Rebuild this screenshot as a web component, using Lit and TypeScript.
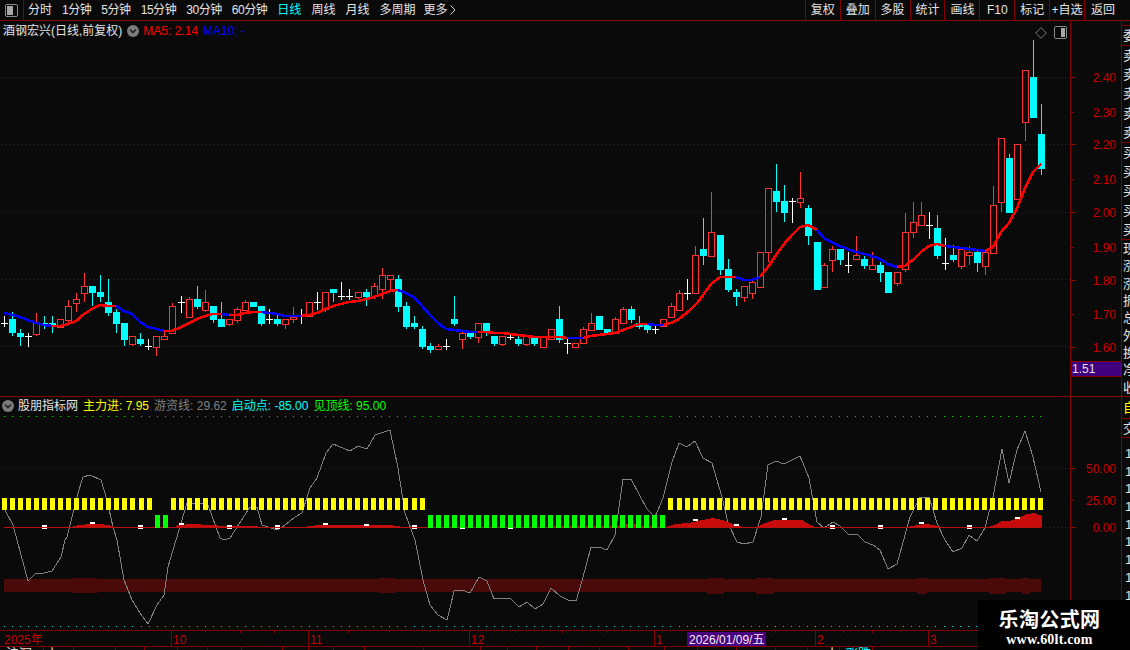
import { LitElement, html, css, svg } from "lit";
import { customElement } from "lit/decorators.js";

type C = [string, number, number, number, number, number];
const CANDLES: C[] = [
  ["w",4,323,323,316,326],["c",12,319,332,312,336],["c",20,333,336,329,346],["w",28,336,336,333,346],
  ["r",36,323,334,313,336],["c",44,323,325,316,329],["c",52,323,325,316,333],["r",60,319,327,319,327],
  ["r",68,306,320,300,323],["r",76,299,303,293,312],["r",84,286,293,273,302],["c",92,286,292,286,306],
  ["c",100,292,296,275,302],["c",108,302,312,279,316],["c",116,312,323,309,333],["c",124,323,339,323,346],
  ["r",132,336,344,336,346],["c",140,339,343,333,346],["w",148,346,346,339,349],["r",156,336,347,336,356],
  ["r",164,336,339,332,339],["r",172,306,333,303,333],["w",181,302,302,296,312],["r",189,299,317,297,318],
  ["c",197,299,306,286,309],["r",205,302,310,290,312],["c",213,306,319,306,323],["c",221,319,326,302,326],
  ["r",229,319,324,319,326],["r",237,309,320,307,323],["r",245,302,310,300,310],["c",253,302,306,302,306],
  ["c",261,306,323,306,326],["w",269,319,319,309,323],["c",277,319,323,313,326],["r",285,319,324,319,329],
  ["r",293,317,319,307,323],
  ["w",301,316,316,309,323],["r",309,302,316,302,317],["w",317,302,302,292,309],["r",325,292,309,292,312],
  ["c",333,289,292,289,302],["w",341,296,296,282,299],["w",349,296,296,289,299],["r",358,292,297,292,299],
  ["c",366,292,296,289,306],["r",374,286,296,283,299],["r",382,275,289,268,299],["r",390,275,279,275,290],
  ["c",398,279,306,275,312],["c",406,306,326,302,329],["c",414,323,326,316,329],["c",422,329,346,326,349],
  ["c",430,346,349,343,353],["r",438,346,349,344,349],["w",446,346,346,339,349],["c",454,319,323,296,326],
  ["r",462,333,339,331,349],["c",470,332,336,332,339],["r",478,323,337,323,343],["c",486,323,331,323,336],
  ["c",494,336,343,336,346],["r",502,336,344,336,346],["w",510,337,337,333,339],["c",518,339,343,336,346],
  ["r",526,336,344,336,346],["c",534,338,343,338,346],["r",543,337,347,337,347],["r",551,329,339,329,339],
  ["c",559,319,339,306,343],["w",567,343,343,339,353],["r",575,343,347,343,347],["r",583,329,343,327,343],
  ["r",591,323,330,313,330],["c",599,316,329,316,329],["c",607,329,333,329,333],["r",615,319,333,317,333],
  ["r",623,309,323,307,323],["c",631,309,319,306,323],["c",639,323,326,316,329],["c",647,323,329,323,333],
  ["w",655,329,329,326,333],["r",663,319,326,319,327],["r",671,306,317,303,317],["r",679,293,310,290,310],
  ["w",687,293,293,279,299],["r",695,255,293,246,293],["c",703,249,255,218,265],["r",711,232,256,192,256],
  ["c",720,235,269,235,275],["c",728,269,289,259,292],["c",736,292,296,289,306],["r",744,286,297,286,302],
  ["r",752,282,293,279,299],["r",760,252,287,252,287],["r",768,188,252,188,262],["c",776,191,201,164,212],
  ["c",784,201,212,185,222],["w",792,201,201,198,222],["r",800,198,202,172,208],["c",808,208,235,205,245],
  ["c",817,242,289,242,289],["r",824,265,287,263,287],["r",832,249,260,246,272],["c",840,249,259,249,265],
  ["w",848,265,265,252,272],["r",856,255,259,236,259],["c",864,259,265,256,269],["r",872,265,269,252,269],
  ["c",880,265,272,262,282],["c",888,272,292,272,292],["r",897,272,283,272,286],["r",905,232,269,213,272],
  ["r",913,222,232,202,238],["r",921,215,225,202,225],["w",929,225,225,212,238],["c",937,228,255,215,259],
  ["w",945,263,263,238,269],["c",953,255,259,245,262],["r",961,249,266,247,269],["r",969,252,255,246,265],
  ["c",977,252,262,249,272],["r",985,252,266,249,275],["r",993,205,253,186,253],["r",1001,138,202,138,212],
  ["c",1009,158,212,154,212],["r",1017,144,199,144,199],["r",1025,70,122,70,141],["c",1033,77,117,40,117],
  ["c",1041,134,168,104,175],
];

const MA: number[][] = [
  [4,313],[12,315],[20,317],[28,320],[36,323],[44,325],[52,326],[60,326],[68,324],[76,321],[84,314],[92,309],
  [100,305],[108,306],[116,306],[124,311],[132,314],[140,322],[148,327],[156,329],[164,331],[172,331],[181,327],
  [189,323],[197,319],[205,316],[213,314],[221,314],[229,315],[237,315],[245,313],[253,312],[261,312],[269,313],
  [277,314],[285,316],[293,316],[301,316],[309,315],[317,313],[325,309],[333,306],[341,304],[349,302],[358,301],
  [366,299],[374,297],[382,294],[390,291],[398,290],[406,293],[414,297],[422,306],[430,315],[438,323],[446,329],
  [454,330],[462,331],[470,332],[478,332],[486,332],[494,333],[502,333],[510,334],[518,335],[526,336],[534,337],
  [543,337],[551,337],[559,337],[567,338],[575,338],[583,338],[591,336],[599,335],[607,334],[615,333],[623,330],
  [631,327],[639,324],[647,324],[655,325],[663,325],[671,323],[679,319],[690,310],[698,302],[711,284],[720,277],
  [736,277],[744,280],[752,280],[760,277],[768,267],[776,255],[784,244],[792,235],[800,227],[808,225],[817,230],
  [824,238],[832,242],[840,246],[848,249],[856,252],[864,254],[872,256],[880,259],[888,264],[897,267],[905,266],
  [913,260],[921,252],[929,246],[937,244],[945,246],[953,247],[961,248],[969,249],[977,250],[985,251],[993,247],
  [1001,232],[1009,223],[1017,208],[1025,188],[1033,172],[1041,164],
];
const MA_COL: [number, number, string][] = [
  [4,53,"#0000ff"],[53,117,"#ff0000"],[117,167,"#0000ff"],[167,221,"#ff0000"],[221,230,"#0000ff"],
  [230,262,"#ff0000"],[262,301,"#0000ff"],[301,398,"#ff0000"],[398,478,"#0000ff"],[478,567,"#ff0000"],
  [567,583,"#0000ff"],[583,647,"#ff0000"],[647,663,"#0000ff"],[663,736,"#ff0000"],[736,757,"#0000ff"],
  [757,817,"#ff0000"],[817,897,"#0000ff"],[897,945,"#ff0000"],[945,985,"#0000ff"],[985,1041,"#ff0000"],
];

const GRAY =
  "5,510 13,525 17,540 28,581 36,573 44,573 52,571 61,557 65,540 67,537 72,517 78,493 83,477 90,475 101,480 107,500 113,527 117,540 124,580 132,600 140,613 148,624 157,605 164,595 168,567 173,550 176,540 187,503 193,503 200,503 208,505 220,538 224,540 230,538 250,507 257,507 262,525 277,530 285,525 295,517 302,513 310,488 317,478 326,453 333,444 350,451 358,446 367,449 375,435 390,430 398,468 405,513 415,540 423,580 430,605 438,615 447,620 450,608 454,591 462,590 470,593 479,577 487,581 494,599 510,598 519,607 527,602 535,609 543,604 551,588 560,596 568,600 576,601 582,581 591,547 599,547 607,550 615,535 623,479 631,479 647,509 655,517 663,498 672,462 679,443 687,447 695,441 703,458 712,463 722,497 728,523 737,542 744,544 753,542 761,517 768,465 776,461 784,464 800,456 809,478 817,522 824,528 833,522 840,526 848,534 857,534 865,542 873,545 880,550 888,569 897,564 910,517 920,497 929,497 937,523 945,540 953,552 962,548 969,535 977,541 985,528 993,497 1002,449 1009,483 1017,450 1025,431 1033,457 1041,492";

const RED_AREAS = [
  "72,527 74,526 80,525 90,524 100,524 108,525 115,527",
  "175,527 178,525 192,524 210,525 225,526 257,526 258,527",
  "305,527 308,526 322,525 390,525 396,526 403,527",
  "547,527 550,526 618,526 620,524 637,524 640,526 667,527",
  "667,527 675,524 688,523 698,521 712,518 723,520 733,524 742,527",
  "756,527 768,522 775,520 802,520 810,525 815,527",
  "908,527 917,525 927,524 933,525 942,527",
  "988,527 997,524 1002,521 1010,521 1018,518 1027,514 1035,513 1042,516 1042,527",
];
const BUMPS: number[][] = [
  [72,97,578,593],[378,395,578,593],[707,724,578,594],[756,774,578,594],[917,927,578,594],
  [989,1006,578,594],[1022,1030,578,594],
];
const WHITES: number[][] = [
  [42,525,4],[90,522,2],[138,525,4],[179,523,2],[227,525,4],[275,525,4],[323,523,2],[364,524,2],[412,525,4],
  [460,528,1],[508,528,1],[693,519,2],[734,524,2],[782,518,2],[830,525,4],[878,525,4],[919,522,2],[967,525,4],[1015,517,2],
];
const barX = (i: number) => Math.round(2 + 8.03 * i);
const hDots = (y: number, a: number, b: number) => {
  let d = "";
  for (let x = a; x < b; x += 4) d += `M${x} ${y}h1v1h-1z`;
  return d;
};

const LABELS_MAIN: [number, string, boolean][] = [
  [77,"2.40",true],[112,"2.30",false],[144,"2.20",true],[179,"2.10",false],[212,"2.00",true],
  [247,"1.90",false],[280,"1.80",true],[314,"1.70",false],[347,"1.60",true],
];
const LABELS_SUB: [number, string, boolean][] = [[468,"50.00",true],[500,"25.00",false],[527,"0.00",true]];

const TABS = ["分时","1分钟","5分钟","15分钟","30分钟","60分钟","日线","周线","月线","多周期"];
const TOOLS = ["复权","叠加","多股","统计","画线","F10","标记","+自选","返回"];
const SIDE_MAIN = [
  { h: "s4", t: [""] },
  { h: "s19", t: ["委"] },
  { h: "s96", t: ["卖","卖","卖","卖","卖"] },
  { h: "s96", t: ["买","买","买","买","买"] },
  { h: "s156", t: ["现","涨","涨","振","总","外","换","净","收"] },
];
const TICKS_UP = [205,240,274,348,389,429,515,562,607,775,843,872,901];
const MAJORS: [number, string][] = [[171,"10"],[308,"11"],[469,"12"],[654,"1"],[815,"2"],[928,"3"]];
const TICKS_DOWN = [43,73,115,144,177,207,241,282,308,333,364,423,480,507,536,568,599,628,664,697,736,775,807,839,872];

@customElement("app-root")
export class AppRoot extends LitElement {
  static styles = css`
    :host {
      display: block; position: relative; width: 1130px; height: 650px; overflow: hidden;
      background: #0a0a0a; color: #e4e4e4;
      font: 12px/1 "Liberation Sans", "Noto Sans CJK SC", sans-serif;
    }
    svg { display: block; }
    .toolbar { display: flex; height: 20px; border-bottom: 1px solid #800000; align-items: stretch; }
    .pane-btn { width: 23px; border-right: 1px solid #800000; display: flex; align-items: center; justify-content: center; }
    .tabs { flex: 1; display: flex; gap: 10px; align-items: center; padding-left: 4px; }
    .tab { white-space: nowrap; }
    .tab.digit { letter-spacing: -0.45px; }
    .tab.on { color: #00ffff; }
    .more { display: flex; align-items: center; gap: 3px; margin-left: -2px; }
    .tools { display: flex; padding-right: 9px; }
    .tool { width: 33.9px; border-left: 1px solid #800000; display: flex; align-items: center; justify-content: center; white-space: nowrap; }
    .tool:last-child { width: 36px; }

    .row { display: flex; }
    .row.main { height: 375px; border-bottom: 1px solid #800000; }
    .row.sub { height: 253px; }
    .chart { position: relative; width: 1070px; flex: none; }
    .axis { width: 50px; flex: none; border-left: 1px solid #800000; position: relative; }
    .side { width: 8px; flex: none; border-left: 1px solid #800000; overflow: hidden; }

    .legend { position: absolute; top: 4px; left: 3px; display: flex; align-items: center; gap: 5px; white-space: nowrap; }
    .legend.sub { top: 3px; left: 2px; }
    .legend .icon { margin-right: -1px; }
    .red { color: #ff0000; } .blue { color: #0000ff; } .yellow { color: #ffff00; }
    .gray { color: #808080; } .cyan { color: #00ffff; } .green { color: #00ff00; }
    .corner { position: absolute; top: 5px; right: 3px; display: flex; gap: 7px; align-items: center; }

    .badge {
      position: absolute; left: 0; top: 340px; width: 50px; height: 16px; box-sizing: border-box;
      background: #40007f; border-top: 1px solid #800000; border-bottom: 1px solid #800000;
      color: #e4e4e4; display: flex; align-items: center; padding-left: 1px;
    }
    .stack { display: flex; flex-direction: column; }
    .sect { box-sizing: content-box; border-bottom: 1px solid #800000; display: flex; flex-direction: column; justify-content: space-around; overflow: hidden; }
    .s4 { height: 4px; } .s19 { height: 19px; } .s96 { height: 96px; } .s156 { height: 156px; border-bottom: 0; }
    .sect span, .nums span { display: block; width: 14px; margin-left: 1px; font-size: 13px; line-height: 1; }
    .sect.y { height: 21px; color: #ffff00; } .sect.w { height: 18px; }
    .nums { display: flex; flex-direction: column; gap: 4.7px; padding-top: 9px; }
    .nums span { padding-left: 2px; }

    .time { height: 15px; border-top: 1px solid #800000; border-bottom: 1px solid #800000; }
    .foot { height: 3px; overflow: hidden; }

    .mark {
      position: absolute; left: 978px; top: 600px; width: 152px; height: 50px; background: #000;
      box-sizing: border-box; padding-right: 9px;
      display: flex; flex-direction: column; align-items: center; color: #fff; font-weight: bold;
    }
    .mark .cn { font-size: 20px; line-height: 20px; margin-top: 9px; font-family: "Noto Sans CJK SC", sans-serif; letter-spacing: 0.4px; }
    .mark .en { font-family: "Liberation Serif", serif; font-size: 14px; line-height: 14px; margin-top: 4px; letter-spacing: 0.2px; }
  `;

  private paneIcon(right: boolean) {
    return html`<svg width="13" height="13" viewBox="0 0 13 13" shape-rendering="crispEdges">
      <rect x="0.5" y="0.5" width="12" height="12" rx="2" fill="none" stroke="#8a8a8a"></rect>
      <rect x=${right ? 7 : 2} y="2" width=${right ? 4 : 6} height="9" fill="#a8a8a8"></rect>
    </svg>`;
  }
  private chevIcon() {
    return html`<svg class="icon" width="12" height="12" viewBox="0 0 12 12">
      <circle cx="6" cy="6" r="6" fill="#7c7c7c"></circle>
      <path d="M3 4.5 L6 7.5 L9 4.5" fill="none" stroke="#161616" stroke-width="1.3"></path>
    </svg>`;
  }

  private candles() {
    let cy = "", rd = "", wh = "", hollow = "";
    for (const [t, x, top, bot, hi, lo] of CANDLES) {
      if (t === "c") {
        cy += `M${x - 3} ${top}h7V${bot + 1}h-7zM${x} ${hi}h1V${lo}h-1z`;
      } else if (t === "w") {
        wh += `M${x} ${hi}h1V${lo + 1}h-1zM${x - 3} ${top}h7v1h-7z`;
      } else {
        hollow += `M${x - 2.5} ${top + 0.5}h6V${bot + 0.5}h-6z`;
        if (hi < top) rd += `M${x} ${hi}h1V${top}h-1z`;
        if (lo > bot) rd += `M${x} ${bot}h1V${lo}h-1z`;
      }
    }
    return svg`
      <path d=${rd} fill="#ff3232"></path>
      <path d=${hollow} fill="none" stroke="#ff3232"></path>
      <path d=${cy} fill="#00ffff"></path>
      <path d=${wh} fill="#ffffff"></path>`;
  }
  private maLine() {
    const near = (x: number) => {
      let b = 0;
      MA.forEach((p, i) => { if (Math.abs(p[0] - x) < Math.abs(MA[b][0] - x)) b = i; });
      return b;
    };
    return MA_COL.map(([a, b, c]) => {
      const pts = MA.slice(near(a), near(b) + 1).map((p) => p.join(",")).join(" ");
      return svg`<polyline points=${pts} fill="none" stroke=${c} stroke-width="2.6"></polyline>`;
    });
  }
  private mainChart() {
    const grid = [77, 144, 212, 279, 346].map((y) => hDots(y, 1, 1070)).join("");
    return html`<svg width="1070" height="375" viewBox="0 21 1070 375" shape-rendering="crispEdges">
      <path d=${grid} fill="#780000"></path>
      ${this.candles()}
      ${this.maLine()}
    </svg>`;
  }
  private subChart() {
    const dots = (y: number) => {
      let d = "";
      for (let i = 0; i < 130; i++) d += `M${Math.round(4 + 8.03 * i)} ${y}h1v1h-1z`;
      return d;
    };
    let yel = "", grn = "";
    for (let i = 0; i < 130; i++) {
      const x = barX(i);
      if (i === 19 || i === 20 || (i >= 53 && i <= 82)) grn += `M${x} 515h5v13h-5z`;
      else yel += `M${x} 498h5v12h-5z`;
    }
    const whites = WHITES.map(([x, y, h]) => `M${x} ${y}h5v${h}h-5z`).join("");
    const bumps = BUMPS.map(([a, b, t, u]) => `M${a} ${t}H${b}V${u}H${a}z`).join("");
    return html`<svg width="1070" height="233" viewBox="0 397 1070 233" shape-rendering="crispEdges">
      <path d=${dots(416)} fill="#00e000"></path>
      <path d=${dots(626)} fill="#00e6e6"></path>
      <path d=${hDots(468, 1, 1070) + hDots(527, 1045, 1070)} fill="#780000"></path>
      <path d=${"M4 579H1041V592H4z" + bumps} fill="#4a0a0a"></path>
      <polyline points=${GRAY} fill="none" stroke="#808080"></polyline>
      ${RED_AREAS.map((p) => svg`<polygon points=${p} fill="#c80c0c"></polygon>`)}
      <path d=${whites} fill="#ffffff"></path>
      <line x1="4" x2="1041" y1="527.5" y2="527.5" stroke="#b81010"></line>
      <path d=${yel} fill="#ffff00"></path>
      <path d=${grn} fill="#00ff00"></path>
    </svg>`;
  }
  private axis(labels: [number, string, boolean][], y0: number, h: number) {
    return html`<svg width="50" height=${h} viewBox=${`0 ${y0} 50 ${h}`} shape-rendering="crispEdges">
      ${labels.map(([y, t, major]) => svg`
        <line x1="0" x2=${major ? 5 : 3} y1=${y + 0.5} y2=${y + 0.5} stroke="#a00000"></line>
        <text x="45" y=${y + 4.5} text-anchor="end" fill="#c80000" font-size="12" shape-rendering="auto">${t}</text>`)}
    </svg>`;
  }
  private timeAxis() {
    return html`<svg width="1070" height="15" viewBox="0 631 1070 15" shape-rendering="crispEdges">
      ${TICKS_UP.map((x) => svg`<line x1=${x + 0.5} x2=${x + 0.5} y1="631" y2="633" stroke="#800000"></line>`)}
      ${MAJORS.map(([x, t]) => svg`
        <line x1=${x + 0.5} x2=${x + 0.5} y1="631" y2="646" stroke="#800000"></line>
        <text x=${x + 2} y="644" fill="#c80000" font-size="12">${t}</text>`)}
      <text x="4" y="644" fill="#c80000" font-size="12">2025年</text>
      <rect x="687" y="632" width="79" height="14" fill="#4b0082"></rect>
      <text x="689" y="644" fill="#f0f0f0" font-size="12">2026/01/09/五</text>
    </svg>`;
  }
  private foot() {
    return html`<svg width="1070" height="3" viewBox="0 647 1070 3">
      <g shape-rendering="crispEdges">
        ${TICKS_DOWN.map((x) => svg`<line x1=${x + 0.5} x2=${x + 0.5} y1="647" y2="650" stroke="#800000"></line>`)}
      </g>
      <text x="6" y="658" fill="#e4e4e4" font-size="13">沪深</text>
      <text x="46" y="658" fill="#e4e4e4" font-size="13">上</text>
      <text x="826" y="658" fill="#e4e4e4" font-size="13">上</text>
      <text x="845" y="658" fill="#00ffff" font-size="13">涨跌</text>
    </svg>`;
  }

  render() {
    return html`
      <div class="toolbar">
        <div class="pane-btn">${this.paneIcon(false)}</div>
        <div class="tabs">
          ${TABS.map((t) => html`<span class="tab ${/\d/.test(t) ? "digit" : ""} ${t === "日线" ? "on" : ""}">${t}</span>`)}
          <span class="tab more">更多
            <svg width="6" height="10" viewBox="0 0 6 10"><path d="M0.5 0.5 L5 5 L0.5 9.5" fill="none" stroke="#d8d8d8"></path></svg>
          </span>
        </div>
        <div class="tools">${TOOLS.map((t) => html`<div class="tool">${t}</div>`)}</div>
      </div>

      <div class="row main">
        <div class="chart">
          ${this.mainChart()}
          <div class="legend">
            <span>酒钢宏兴(日线,前复权)</span>
            ${this.chevIcon()}
            <span class="red">MA5: 2.14</span>
            <span class="blue">MA10: -</span>
          </div>
          <div class="corner">
            <svg width="12" height="12" viewBox="0 0 12 12"><path d="M6 0.7 L11.3 6 L6 11.3 L0.7 6 Z" fill="none" stroke="#7a7a7a"></path></svg>
            ${this.paneIcon(true)}
          </div>
        </div>
        <div class="axis">
          ${this.axis(LABELS_MAIN, 21, 375)}
          <div class="badge">1.51</div>
        </div>
        <div class="side stack">
          ${SIDE_MAIN.map((s) => html`<div class="sect ${s.h}">${s.t.map((c) => html`<span>${c}</span>`)}</div>`)}
        </div>
      </div>

      <div class="row sub">
        <div class="chart">
          ${this.subChart()}
          <div class="legend sub">
            ${this.chevIcon()}
            <span>股朋指标网</span>
            <span class="yellow">主力进: 7.95</span>
            <span class="gray">游资线: 29.62</span>
            <span class="cyan">启动点: -85.00</span>
            <span class="green">见顶线: 95.00</span>
          </div>
          <div class="time">${this.timeAxis()}</div>
          <div class="foot">${this.foot()}</div>
        </div>
        <div class="axis">${this.axis(LABELS_SUB, 397, 253)}</div>
        <div class="side stack">
          <div class="sect y"><span>自</span></div>
          <div class="sect w"><span>交</span></div>
          <div class="nums">${Array.from({ length: 9 }, () => html`<span>1</span>`)}</div>
        </div>
      </div>

      <div class="mark">
        <div class="cn">乐淘公式网</div>
        <div class="en">www.60lt.com</div>
      </div>
    `;
  }
}
